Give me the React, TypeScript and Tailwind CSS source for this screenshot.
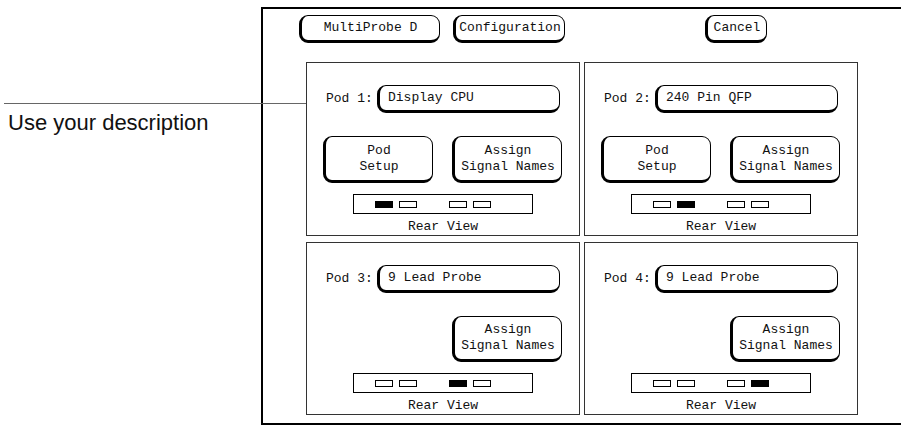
const mono = 'font-["Liberation_Mono","DejaVu_Sans_Mono",monospace] text-[13px] text-[#111]'

type Pod = { id: number; name: string; setup: boolean; active: number }

const pods: Pod[] = [
  { id: 1, name: 'Display CPU', setup: true, active: 0 },
  { id: 2, name: '240 Pin QFP', setup: true, active: 1 },
  { id: 3, name: '9 Lead Probe', setup: false, active: 2 },
  { id: 4, name: '9 Lead Probe', setup: false, active: 3 },
]

function Key({ className, children }: { className: string; children: React.ReactNode }) {
  return (
    <div
      className={`flex flex-col items-center justify-center rounded-[9px] border border-b-[3px] border-l-[3px] border-black bg-white leading-[16px] ${className}`}
    >
      {children}
    </div>
  )
}

function PodPanel({ pod }: { pod: Pod }) {
  return (
    <div className="flex h-full flex-col border border-[#333]">
      <div className="mt-[22px] flex h-[28px] items-center">
        <span className="w-[70px] pl-[19px]">Pod {pod.id}:</span>
        <div className="flex h-full w-[183px] items-center rounded-[9px] border border-b-[3px] border-l-[3px] border-black pl-[8px]">
          {pod.name}
        </div>
      </div>

      <div className="mt-[23px] flex h-[47px] gap-[19px] pl-[16px]">
        {pod.setup ? (
          <Key className="w-[110px]">
            <span>Pod</span>
            <span>Setup</span>
          </Key>
        ) : (
          <div className="w-[110px]" />
        )}
        <Key className="w-[110px]">
          <span>Assign</span>
          <span>Signal Names</span>
        </Key>
      </div>

      <div className="mt-[11px] ml-[46px] flex h-[20px] w-[180px] items-center border border-black pl-[21px]">
        {[0, 1, 2, 3].map((i) => (
          <span
            key={i}
            className={`h-[7px] w-[18px] border border-black ${i === 1 ? 'mr-[32px]' : 'mr-[6px]'} ${pod.active === i ? 'bg-black' : 'bg-white'}`}
          />
        ))}
      </div>

      <p className="mt-[5px] text-center leading-[16px]">Rear View</p>
    </div>
  )
}

export default function App() {
  return (
    <div className={`relative flex h-[427px] w-[901px] overflow-hidden bg-white ${mono}`}>
      <div className="w-[261px] shrink-0 pt-[112px] pl-[8px] font-['Liberation_Sans',Arial,sans-serif] text-[22px] leading-none text-[#111]">
        Use your description
      </div>

      {/* callout line */}
      <div className="absolute left-[4px] top-[103px] h-px w-[302px] bg-[#666]" />

      <div className="mt-[7px] h-[418px] flex-1 border-y-2 border-l-2 border-black">
        <div className="mt-[6px] flex h-[28px] pl-[36px]">
          <Key className="w-[141px]">MultiProbe D</Key>
          <Key className="ml-[13px] w-[112px]">Configuration</Key>
          <Key className="ml-[140px] w-[62px]">Cancel</Key>
        </div>

        <div className="mt-[19px] ml-[43px] grid grid-cols-[274px_274px] grid-rows-[174px_173px] gap-x-[4px] gap-y-[6px]">
          {pods.map((pod) => (
            <PodPanel key={pod.id} pod={pod} />
          ))}
        </div>
      </div>
    </div>
  )
}
